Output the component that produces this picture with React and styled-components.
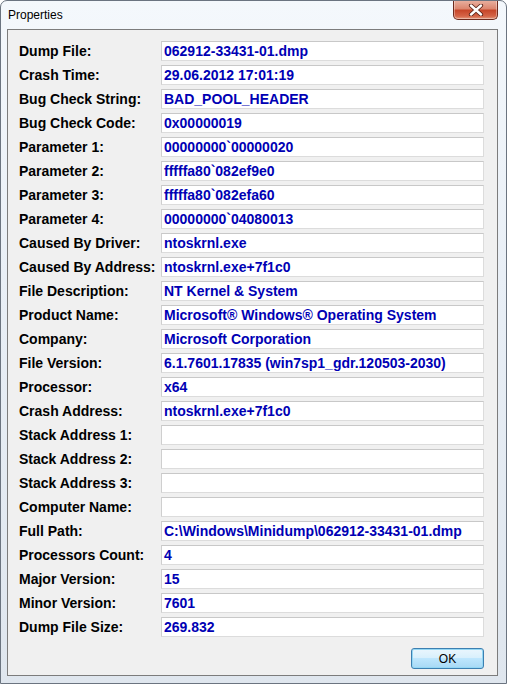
import React from 'react';
import styled, { createGlobalStyle } from 'styled-components';

const GlobalStyle = createGlobalStyle`
  html, body {
    margin: 0;
    padding: 0;
    background: #ffffff;
  }
  * {
    box-sizing: border-box;
  }
`;

const Window = styled.div`
  width: 507px;
  height: 684px;
  display: flex;
  flex-direction: column;
  border: 1px solid #6b7480;
  border-radius: 7px 7px 0 0;
  background: linear-gradient(180deg, #f4f8fc 0%, #e9eff6 40%, #dfe6ee 100%);
  overflow: hidden;
`;

const TitleBar = styled.div`
  height: 28px;
  display: flex;
  justify-content: space-between;
  align-items: flex-start;
  padding-left: 7px;
  padding-right: 8px;
`;

const Title = styled.span`
  font-family: 'Liberation Sans', Arial, sans-serif;
  font-size: 12px;
  line-height: 28px;
  color: #000;
`;

const CloseButton = styled.div`
  width: 45px;
  height: 20px;
  margin-top: -1px;
  display: flex;
  align-items: center;
  justify-content: center;
  border: 1px solid #6d2a1d;
  border-top: none;
  border-radius: 0 0 5px 5px;
  background: linear-gradient(180deg, #eab3a3 0%, #dc8770 45%, #c7472a 55%, #d56447 85%, #e39a7e 100%);
  box-shadow: inset 0 0 0 1px rgba(255, 255, 255, 0.35);
`;

const Client = styled.div`
  flex: 1;
  margin: 0 8px 7px 6px;
  border: 1px solid #7c7c7c;
  background: #f0f0f0;
  padding: 11px 13px 6px 11px;
  display: flex;
  flex-direction: column;
`;

const Rows = styled.div`
  display: flex;
  flex-direction: column;
  gap: 4px;
`;

const Row = styled.div`
  display: grid;
  grid-template-columns: 142px 1fr;
  align-items: center;
  height: 20px;
`;

const Label = styled.span`
  font-family: 'Liberation Sans', Arial, sans-serif;
  font-weight: bold;
  font-size: 14px;
  color: #000;
  white-space: nowrap;
`;

const Value = styled.div`
  height: 20px;
  background: #ffffff;
  border: 1px solid #dcdcdc;
  border-top-color: #c8c8c8;
  border-left-color: #cfcfcf;
  padding-left: 2px;
  font-family: 'Liberation Sans', Arial, sans-serif;
  font-weight: bold;
  font-size: 14px;
  line-height: 18px;
  color: #0000b4;
  white-space: nowrap;
  overflow: hidden;
`;

const Footer = styled.div`
  display: flex;
  justify-content: flex-end;
  margin-top: 11px;
`;

const OkButton = styled.button`
  width: 73px;
  height: 21px;
  padding: 0;
  border: 1px solid #3c7fb1;
  border-radius: 3px;
  background: linear-gradient(180deg, #eaf6fd 0%, #d9f0fc 45%, #bee6fd 50%, #a7d9f5 100%);
  box-shadow: inset 0 0 0 1px #94d7f4;
  font-family: 'Liberation Sans', Arial, sans-serif;
  font-size: 12px;
  color: #000;
`;

const rows = [
  ['Dump File:', '062912-33431-01.dmp'],
  ['Crash Time:', '29.06.2012 17:01:19'],
  ['Bug Check String:', 'BAD_POOL_HEADER'],
  ['Bug Check Code:', '0x00000019'],
  ['Parameter 1:', '00000000`00000020'],
  ['Parameter 2:', 'fffffa80`082ef9e0'],
  ['Parameter 3:', 'fffffa80`082efa60'],
  ['Parameter 4:', '00000000`04080013'],
  ['Caused By Driver:', 'ntoskrnl.exe'],
  ['Caused By Address:', 'ntoskrnl.exe+7f1c0'],
  ['File Description:', 'NT Kernel & System'],
  ['Product Name:', 'Microsoft® Windows® Operating System'],
  ['Company:', 'Microsoft Corporation'],
  ['File Version:', '6.1.7601.17835 (win7sp1_gdr.120503-2030)'],
  ['Processor:', 'x64'],
  ['Crash Address:', 'ntoskrnl.exe+7f1c0'],
  ['Stack Address 1:', ''],
  ['Stack Address 2:', ''],
  ['Stack Address 3:', ''],
  ['Computer Name:', ''],
  ['Full Path:', 'C:\\Windows\\Minidump\\062912-33431-01.dmp'],
  ['Processors Count:', '4'],
  ['Major Version:', '15'],
  ['Minor Version:', '7601'],
  ['Dump File Size:', '269.832'],
];

function CloseIcon() {
  return (
    <svg width="16" height="12" viewBox="0 0 16 12">
      <path d="M3 1.5 L13 10.5 M13 1.5 L3 10.5" stroke="#5a2418" strokeWidth="4.2" strokeLinecap="round" />
      <path d="M3 1.5 L13 10.5 M13 1.5 L3 10.5" stroke="#ffffff" strokeWidth="2.4" strokeLinecap="round" />
    </svg>
  );
}

export default function App() {
  return (
    <>
      <GlobalStyle />
      <Window>
        <TitleBar>
          <Title>Properties</Title>
          <CloseButton>
            <CloseIcon />
          </CloseButton>
        </TitleBar>
        <Client>
          <Rows>
            {rows.map(([label, value]) => (
              <Row key={label}>
                <Label>{label}</Label>
                <Value>{value}</Value>
              </Row>
            ))}
          </Rows>
          <Footer>
            <OkButton>OK</OkButton>
          </Footer>
        </Client>
      </Window>
    </>
  );
}
